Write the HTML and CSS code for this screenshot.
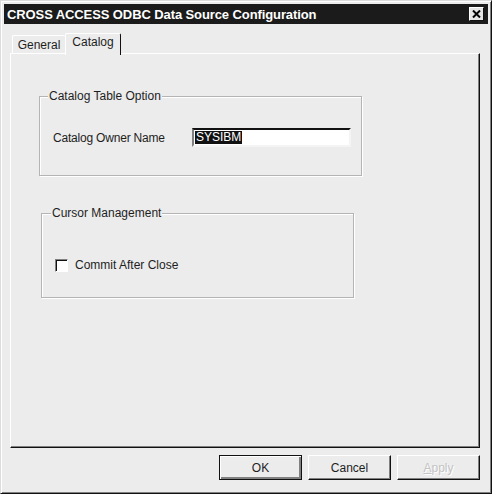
FILE: index.html
```html
<!DOCTYPE html>
<html lang="en">
<head>
    <meta charset="UTF-8">
    <title>CROSS ACCESS ODBC Data Source Configuration</title>
    <link rel="stylesheet" href="styles.css">
</head>
<body>
    <div class="window">
        <div class="titlebar">
            <span class="title">CROSS ACCESS ODBC Data Source Configuration</span>
            <div class="close">
                <svg width="9" height="8" viewBox="0 0 9 8">
                    <path d="M1 0.5 L8 7.5 M8 0.5 L1 7.5" stroke="#000" stroke-width="2"/>
                </svg>
            </div>
        </div>

        <div class="dialog-body">
            <div class="tabs">
                <div class="tab">General</div>
                <div class="tab tab-active">Catalog</div>
            </div>

            <div class="panel">
                <div class="group group-catalog">
                    <div class="legend">Catalog Table Option</div>
                    <div class="field-row">
                        <span class="field-label">Catalog Owner Name</span>
                        <div class="textbox"><span class="selected">SYSIBM</span></div>
                    </div>
                </div>

                <div class="group group-cursor">
                    <div class="legend">Cursor Management</div>
                    <div class="check-row">
                        <span class="checkbox"></span>
                        <span class="check-label">Commit After Close</span>
                    </div>
                </div>
            </div>

            <div class="buttons">
                <div class="button button-default">OK</div>
                <div class="button">Cancel</div>
                <div class="button button-disabled"><u>A</u>pply</div>
            </div>
        </div>
    </div>
</body>
</html>
```

FILE: styles.css
```css
:root {
    --face: #ececec;
    --light: #ffffff;
    --shadow: #808080;
    --dark: #111111;
    --text: #1e1e1e;
}

* {
    margin: 0;
    padding: 0;
    box-sizing: border-box;
}

body {
    font-family: 'Liberation Sans', Arial, sans-serif;
    font-size: 12px;
    color: var(--text);
    background: var(--face);
}

.window {
    width: 492px;
    height: 494px;
    padding: 3px;
    background: var(--face);
    border: 1px solid;
    border-color: #dcdcdc var(--dark) var(--dark) #dcdcdc;
    box-shadow: inset 1px 1px 0 var(--light), inset -1px -1px 0 var(--shadow);
}

.titlebar {
    height: 20px;
    background: #1b1b1b;
    color: #fff;
    display: flex;
    align-items: center;
    justify-content: space-between;
    padding: 0 4px 0 3px;
}

.title {
    font-weight: bold;
    font-size: 13px;
    letter-spacing: -0.1px;
}

.close {
    width: 15px;
    height: 14px;
    background: #e4e4e4;
    border: 1px solid;
    border-color: var(--light) var(--dark) var(--dark) var(--light);
    display: flex;
    align-items: center;
    justify-content: center;
}

.dialog-body {
    padding: 9px 8px 0 6px;
}

.tabs {
    display: flex;
    align-items: flex-start;
    height: 20px;
    padding-left: 2px;
}

.tab {
    height: 18px;
    margin-top: 2px;
    width: 53px;
    padding-top: 2px;
    text-align: center;
    border-top: 1px solid var(--light);
    border-left: 1px solid var(--light);
    border-radius: 2px 2px 0 0;
}

.tab-active {
    position: relative;
    z-index: 1;
    width: 56px;
    height: 22px;
    margin-top: 0;
    padding-top: 1px;
    background: var(--face);
    border-right: 1px solid var(--dark);
}

.panel {
    height: 395px;
    width: 470px;
    border: 1px solid;
    border-color: var(--light) var(--dark) var(--dark) var(--light);
    box-shadow: inset -1px -1px 0 var(--shadow);
    overflow: hidden;
}

.group {
    border: 1px solid #b4b4b4;
    box-shadow: 1px 1px 0 var(--light), inset 1px 1px 0 var(--light);
}

.group-catalog {
    margin: 42px 0 0 28px;
    width: 323px;
    height: 80px;
}

.group-cursor {
    margin: 37px 0 0 30px;
    width: 313px;
    height: 85px;
}

.legend {
    width: fit-content;
    line-height: 14px;
    margin: -8px 0 0 8px;
    padding: 0 1px;
    background: var(--face);
}

.group-cursor .legend {
    margin-left: 9px;
}

.field-row {
    display: flex;
    align-items: center;
    margin-top: 25px;
    padding-left: 13px;
    letter-spacing: -0.2px;
}

.field-label {
    width: 139px;
}

.textbox {
    width: 159px;
    height: 19px;
    background: #fff;
    border: 2px solid;
    border-color: var(--dark) #f4f4f4 #f4f4f4 var(--shadow);
    padding: 1px 0 0 1px;
    line-height: 13px;
    letter-spacing: 0;
}

.selected {
    display: inline-block;
    background: #111;
    color: #fff;
    padding: 0 1px;
}

.check-row {
    display: flex;
    align-items: center;
    margin-top: 38px;
    padding-left: 13px;
}

.checkbox {
    width: 13px;
    height: 13px;
    background: #fff;
    border: 1px solid;
    border-color: var(--shadow) var(--light) var(--light) var(--shadow);
    box-shadow: inset 1px 1px 0 var(--dark);
    margin-right: 7px;
}

.buttons {
    display: flex;
    justify-content: flex-end;
    gap: 6px;
    width: 470px;
    margin-top: 7px;
}

.button {
    width: 83px;
    height: 25px;
    display: flex;
    align-items: center;
    justify-content: center;
    border: 1px solid;
    border-color: var(--light) var(--dark) var(--dark) var(--light);
    box-shadow: inset -1px -1px 0 var(--shadow);
}

.button-default {
    border: 1px solid var(--dark);
    box-shadow: inset 1px 1px 0 var(--light), inset -2px -2px 0 var(--shadow);
}

.button-disabled {
    color: #c4c4c4;
    text-shadow: 1px 1px 0 var(--light);
}
```
